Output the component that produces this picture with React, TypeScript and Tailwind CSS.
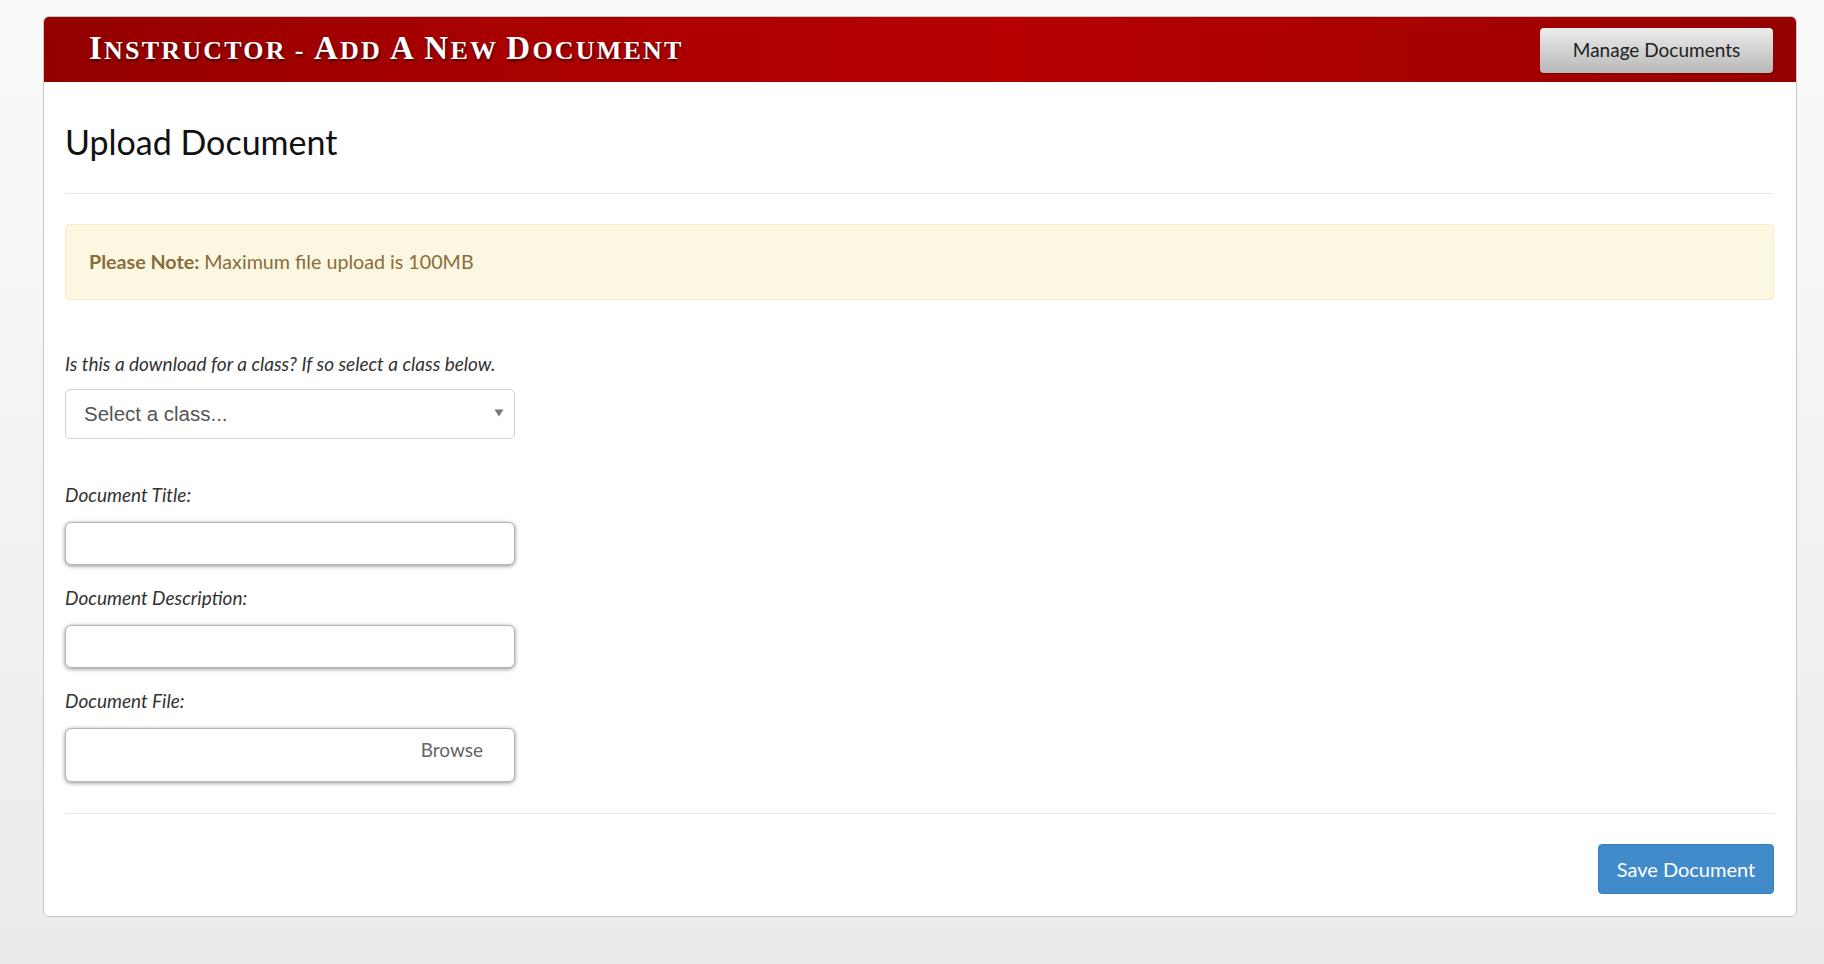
import React from "react";

const sans = "font-['Lato','Open_Sans',sans-serif]";

function Label({ children, mb = "mb-[15px]" }: { children: React.ReactNode; mb?: string }) {
  return (
    <div className={`${sans} italic text-[19px] leading-[24px] text-[#333] ${mb}`}>{children}</div>
  );
}

function TextInput() {
  return (
    <div className="w-[450px] h-[43px] rounded-[6px] border border-[#b5b5b5] bg-white shadow-[0_1px_4px_rgba(0,0,0,0.45)]" />
  );
}

function Word({ first, rest }: { first: string; rest: string }) {
  return (
    <span>
      <span className="text-[33px]">{first}</span>
      <span className="text-[26px]">{rest}</span>
    </span>
  );
}

export default function App() {
  return (
    <div className="min-h-[964px] w-full bg-gradient-to-b from-[#fafafa] to-[#ebebeb] pt-[16px] pl-[43px]">
      <div className="w-[1754px] rounded-[6px] border border-[#c6c6c6] bg-white overflow-hidden">
        {/* Header */}
        <div className="h-[65px] flex items-center justify-between pl-[45px] pr-[23px] bg-[linear-gradient(to_right,#940000_0%,#a80000_25%,#b60000_55%,#a60000_82%,#950000_100%)]">
          <div className="font-['Liberation_Serif',serif] font-bold leading-[40px] text-white uppercase tracking-[2.2px] [word-spacing:2px] [text-shadow:1px_2px_3px_rgba(0,0,0,0.6)] pt-[2px] whitespace-nowrap">
            <Word first="I" rest="nstructor" /> <span className="text-[26px]">-</span> <Word first="A" rest="dd" />{" "}
            <Word first="A" rest="" /> <Word first="N" rest="ew" /> <Word first="D" rest="ocument" />
          </div>
          <button className={`${sans} w-[233px] h-[45px] mt-[2px] rounded-[4px] bg-gradient-to-b from-[#ededed] to-[#b8b8b8] text-[19px] text-[#222] shadow-[0_1px_1px_rgba(0,0,0,0.2)]`}>
            Manage Documents
          </button>
        </div>

        {/* Body */}
        <div className="pl-[21px] pr-[22px] pb-[22px]">
          <h1 className={`${sans} text-[34px] leading-[40px] text-[#111] mt-[40px] font-normal`}>Upload Document</h1>
          <div className="mt-[31px] h-px bg-[#e8e8e8]" />

          <div className="mt-[30px] h-[76px] rounded-[4px] border border-[#f8e9c6] bg-[#fcf7e1] flex items-center pl-[23px]">
            <span className={`${sans} text-[19.7px] text-[#8a6d3b]`}>
              <b className="font-bold">Please Note:</b> Maximum file upload is 100MB
            </span>
          </div>

          <div className="mt-[52px]">
            <Label mb="mb-[13px]">Is this a download for a class? If so select a class below.</Label>
            <div className="relative w-[450px] h-[50px] rounded-[5px] border border-[#d2d2d2] bg-white flex items-center pl-[18px]">
              <span className="font-['Liberation_Sans',Arial,sans-serif] text-[20.5px] text-[#555]">Select a class...</span>
              <svg className="absolute right-[10px] top-[19px]" width="10" height="8" viewBox="0 0 10 8">
                <path d="M0.5 0.5 L9.5 0.5 L5 7.5 Z" fill="#777" />
              </svg>
            </div>
          </div>

          <div className="mt-[44px]">
            <Label>Document Title:</Label>
            <TextInput />
          </div>

          <div className="mt-[21px]">
            <Label>Document Description:</Label>
            <TextInput />
          </div>

          <div className="mt-[21px]">
            <Label>Document File:</Label>
            <div className="w-[450px] h-[54px] rounded-[6px] border border-[#b5b5b5] bg-white shadow-[0_1px_4px_rgba(0,0,0,0.45)] flex items-center justify-end pr-[31px] pb-[9px]">
              <span className={`${sans} text-[19px] text-[#666]`}>Browse</span>
            </div>
          </div>

          <div className="mt-[31px] h-px bg-[#e8e8e8]" />

          <div className="mt-[30px] flex justify-end">
            <button className={`${sans} w-[176px] h-[50px] rounded-[4px] bg-[#428bca] border border-[#3a7fbd] text-[20px] text-white`}>
              Save Document
            </button>
          </div>
        </div>
      </div>
    </div>
  );
}
